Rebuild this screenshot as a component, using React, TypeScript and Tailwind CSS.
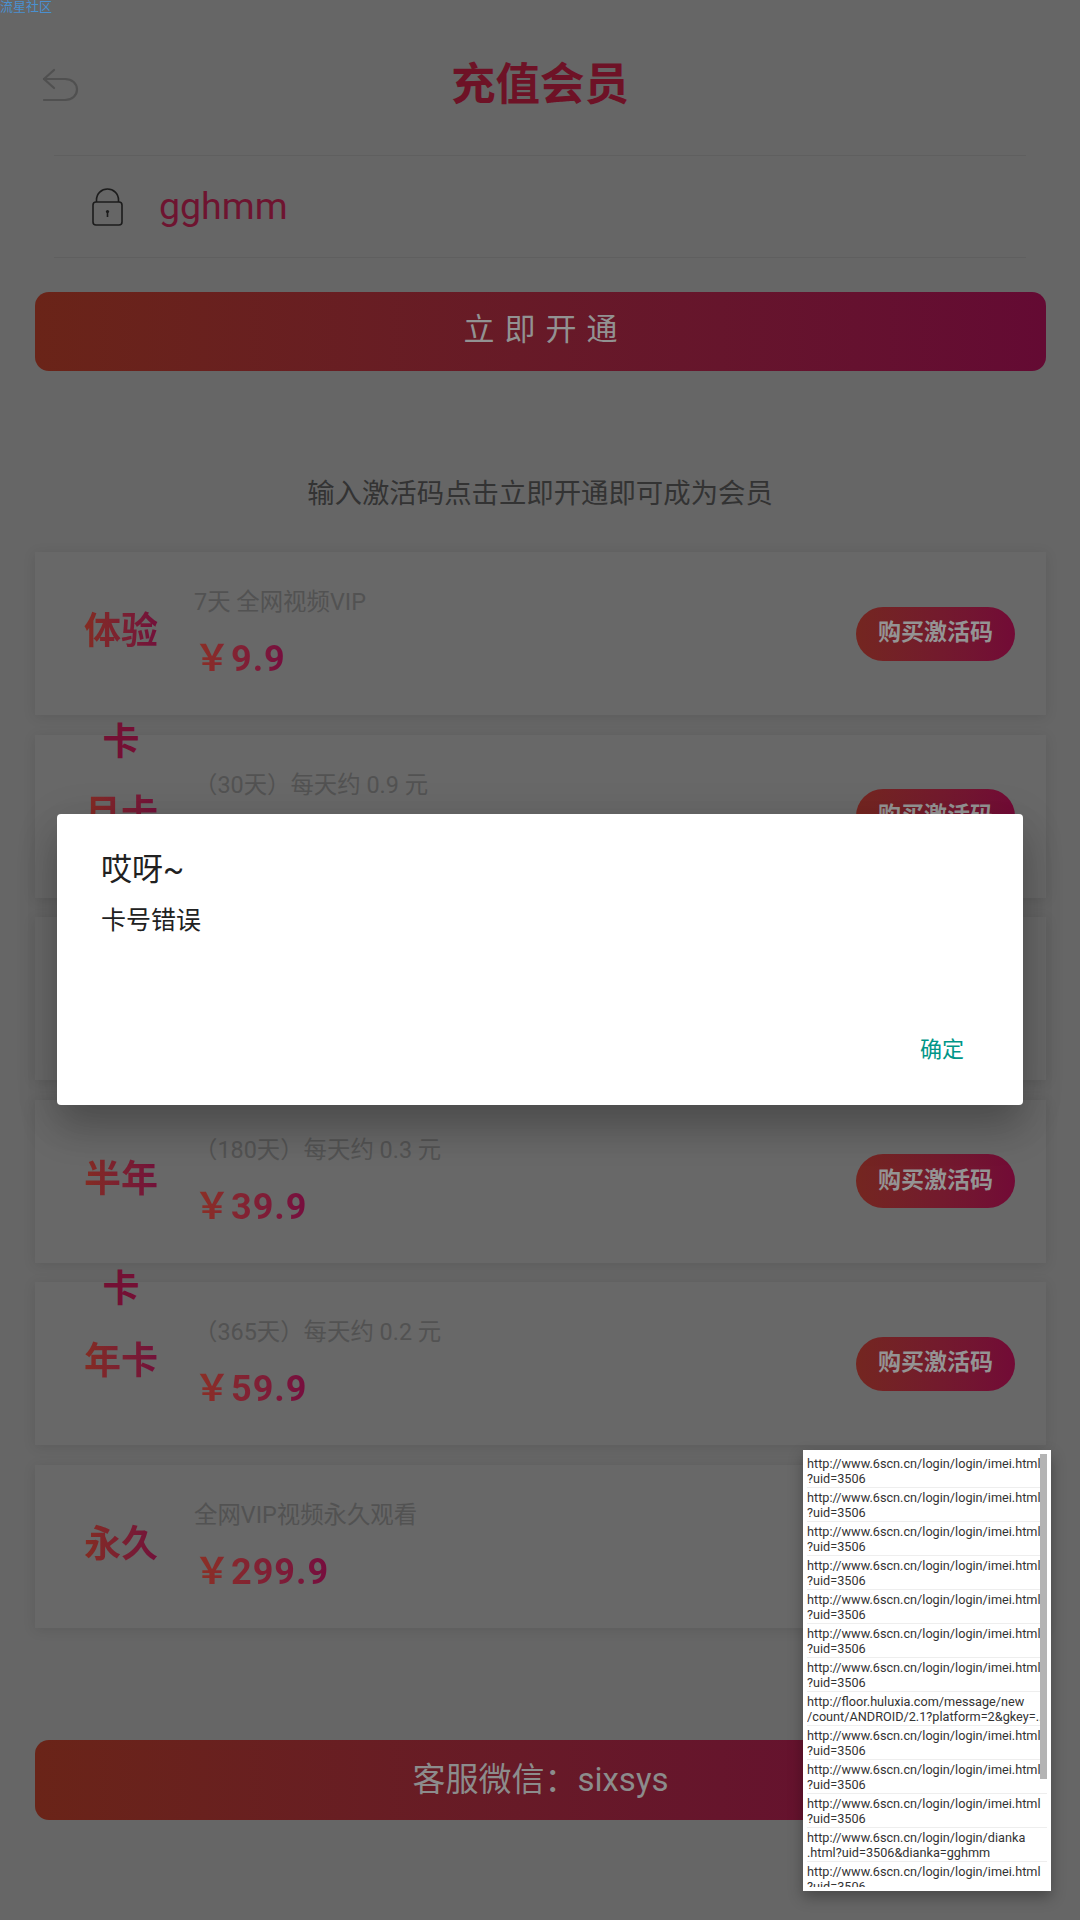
import React from 'react'

const FONT = 'font-["Roboto","Noto_Sans_CJK_SC",sans-serif]'

interface Plan {
  label: string
  extra?: string
  title: string
  price?: string
}

const PLANS: Plan[] = [
  { label: '体验', title: '7天 全网视频VIP', price: '9.9' },
  { label: '月卡', extra: '卡', title: '（30天）每天约 0.9 元' },
  { label: '', title: '' },
  { label: '半年', title: '（180天）每天约 0.3 元', price: '39.9' },
  { label: '年卡', extra: '卡', title: '（365天）每天约 0.2 元', price: '59.9' },
  { label: '永久', title: '全网VIP视频永久观看', price: '299.9' },
]

const IMEI = ['http://www.6scn.cn/login/login/imei.html', '?uid=3506']

const REQUESTS: string[][] = [
  IMEI,
  IMEI,
  IMEI,
  IMEI,
  IMEI,
  IMEI,
  IMEI,
  ['http://floor.huluxia.com/message/new', '/count/ANDROID/2.1?platform=2&gkey=...'],
  IMEI,
  IMEI,
  IMEI,
  ['http://www.6scn.cn/login/login/dianka', '.html?uid=3506&dianka=gghmm'],
  IMEI,
]

function PlanCard({ plan }: { plan: Plan }) {
  return (
    <div className="h-[163px] flex items-center pl-[49px] pr-[31px] bg-[#686868] shadow-[0_2px_12px_rgba(0,0,0,0.1)]">
      <div className="relative w-[74px] shrink-0 mb-[3px]">
        {plan.extra && (
          <span className="absolute bottom-full left-0 w-full mb-[28px] text-center text-[37px] leading-[44px] font-bold text-[#741034]">
            {plan.extra}
          </span>
        )}
        {plan.label ? (
          <span className="block text-[37px] leading-[44px] font-bold text-transparent bg-clip-text bg-linear-to-r from-[#842c22] to-[#72103a]">
            {plan.label}
          </span>
        ) : null}
      </div>
      <div className="self-stretch ml-[36px] pt-[34px]">
        <p className="text-[23.4px] leading-[32px] text-[#525252] whitespace-nowrap">{plan.title}</p>
        {plan.price && (
          <p className="mt-[19px] inline-block text-[36px] leading-[44px] font-bold tracking-[1px] text-transparent bg-clip-text bg-linear-to-r from-[#8c3024] to-[#760c3e] whitespace-nowrap">
            ￥{plan.price}
          </p>
        )}
      </div>
      {plan.label && (
        <div className="ml-auto w-[159px] h-[54px] rounded-full flex items-center justify-center text-[23px] font-bold text-[#949494] bg-linear-to-r from-[#742620] to-[#720a36]">
          购买激活码
        </div>
      )}
    </div>
  )
}

export default function App() {
  return (
    <div className={`relative w-[1080px] h-[1920px] overflow-hidden bg-[#666666] ${FONT}`}>
      <div className="h-[16px] text-[13px] leading-[13px] text-[#4a90d0]">流星社区</div>

      <header className="relative h-[139px] flex items-center justify-center">
        <svg className="absolute left-[42px] top-[52px]" width="38" height="34" viewBox="0 0 38 34" fill="none" stroke="#505050" strokeWidth="2.2" strokeLinecap="round" strokeLinejoin="round">
          <path d="M12 2 L2 11 L12 20" />
          <path d="M2 11 H23 C30 11 35 15.5 35 21.5 C35 27.5 30 32 23 32 H2" />
        </svg>
        <h1 className="mb-[2px] text-[44.5px] leading-[56px] font-bold text-[#6e1226]">充值会员</h1>
      </header>

      <div className="mx-[54px] h-[103px] border-y border-[#5f5f5f] flex items-center pl-[38px]">
        <svg width="31" height="38" viewBox="0 0 31 38" fill="none" stroke="#1c1c1c" strokeWidth="1.6">
          <path d="M4.5 14 V12 C4.5 5.5 9.5 1 15.5 1 C21.5 1 26.5 5.5 26.5 12 V14" />
          <rect x="1" y="14" width="29" height="23" rx="3" />
          <path d="M15.5 24 V29" strokeWidth="1.6" />
          <circle cx="15.5" cy="23.5" r="1.6" fill="#1c1c1c" stroke="none" />
        </svg>
        <span className="ml-[36px] mb-[2px] text-[37.5px] leading-[44px] text-[#6e1430]">gghmm</span>
      </div>

      <button className="block mt-[34px] mx-[35px] w-[1011px] h-[79px] rounded-[14px] pl-[10px] pb-[2px] text-[31px] tracking-[10px] text-[#929292] bg-linear-to-r from-[#6a2418] to-[#640a33]">
        立即开通
      </button>

      <p className="mt-[103px] h-[40px] text-center text-[27.4px] leading-[40px] text-[#333333]">
        输入激活码点击立即开通即可成为会员
      </p>

      <div className="mt-[38px] ml-[35px] mr-[34px] flex flex-col gap-[19.5px]">
        {PLANS.map((plan, i) => (
          <PlanCard key={i} plan={plan} />
        ))}
      </div>

      <button className="block mt-[112px] mx-[35px] w-[1011px] h-[80px] rounded-[14px] text-[33px] text-[#8c8c8c] bg-linear-to-r from-[#6a2418] to-[#640a33]">
        客服微信：sixsys
      </button>

      {/* Alert dialog */}
      <div className="absolute left-[57px] top-[814px] w-[966px] h-[291px] rounded-[4px] bg-white px-[44px] shadow-[0_24px_38px_rgba(0,0,0,0.2),0_9px_46px_rgba(0,0,0,0.12)]">
        <p className="mt-[36px] text-[31px] leading-[40px] text-[#212121]">哎呀~</p>
        <p className="mt-[14px] text-[25px] leading-[34px] text-[#212121]">卡号错误</p>
        <p className="absolute right-[59px] bottom-[40px] text-[22px] leading-[30px] text-[#009688]">确定</p>
      </div>

      {/* Request log */}
      <div className="absolute left-[803px] top-[1450px] w-[248px] h-[441px] bg-white p-[4px] shadow-[0_6px_14px_rgba(0,0,0,0.3)]">
        <div className="relative h-[433px] overflow-hidden">
          {REQUESTS.map((lines, i) => (
            <div key={i} className="h-[34px] border-b border-[#eeeeee] text-[12.7px] leading-[15px] text-[#333333] whitespace-nowrap">
              <div className="h-[2px]" />
              {lines.map((line, j) => (
                <div key={j}>{line}</div>
              ))}
            </div>
          ))}
          <div className="absolute left-[233px] top-0 w-[7px] h-[325px] bg-[#b4b4b4]" />
        </div>
      </div>
    </div>
  )
}
